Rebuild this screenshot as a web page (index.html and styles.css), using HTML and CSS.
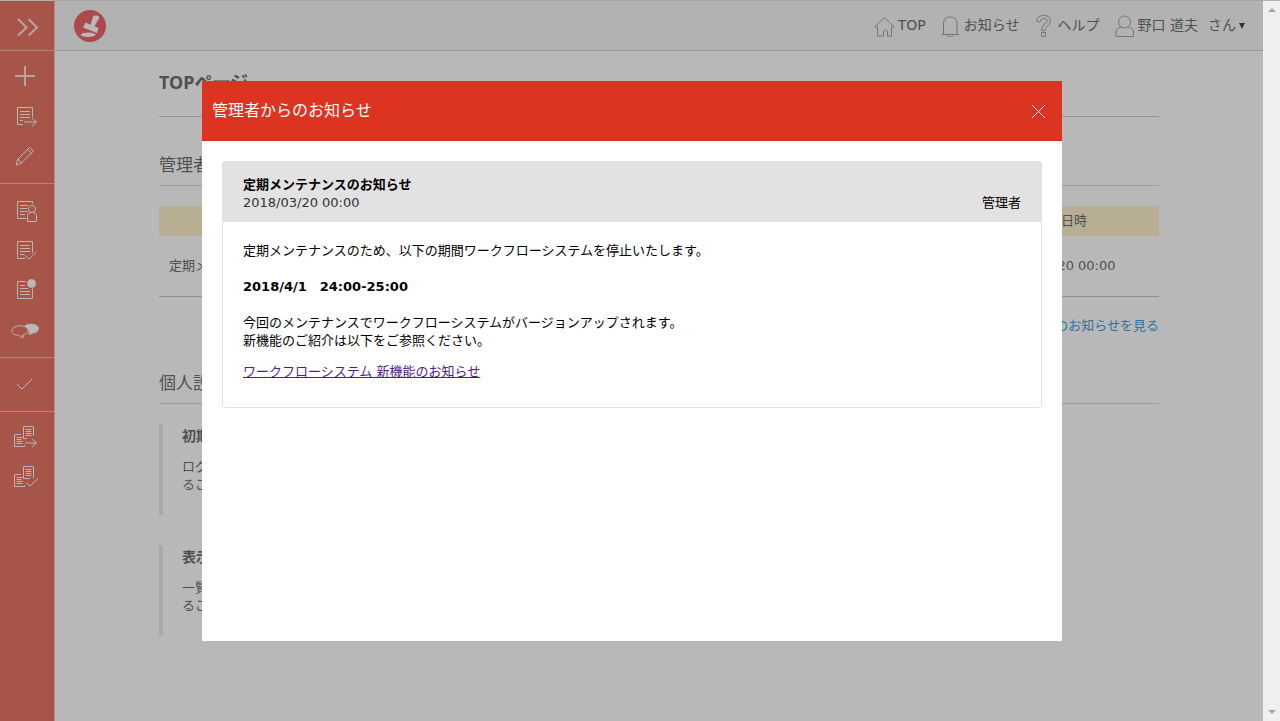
FILE: index.html
```html
<!DOCTYPE html>
<html lang="ja">
<head>
<meta charset="utf-8">
<title>TOPページ</title>
<link rel="stylesheet" href="styles.css">
</head>
<body>
<div class="app">
  <nav class="sidebar" aria-label="メニュー">
    <button class="side-toggle" aria-label="メニューを開く">
      <svg width="54" height="48" viewBox="0 0 54 48"><path class="thick" d="M18 17l8.500 8.500-8.500 8M28.500 17l8.500 8.500-8.500 8"/></svg>
    </button>
    <div class="side-group">
      <button class="side-item" aria-label="新規作成"><svg width="54" height="40" viewBox="0 0 54 40"><path class="thick" d="M15 20h20M25 10v20"/></svg></button>
      <button class="side-item" aria-label="申請書類"><svg width="54" height="40" viewBox="0 0 54 40"><path d="M32.500 21V11.500h-15v17H23M20 15.500h10M20 18.500h10M20 21.500h10M20 24.500h3M24 26h12.500M32 22l4.500 4-4.500 4"/></svg></button>
      <button class="side-item" aria-label="下書き"><svg width="54" height="40" viewBox="0 0 54 40"><path d="M16 29l2-6L29.500 11.500l4 3.500L21.500 27zM18 23l3.500 4M27.500 13.500l4 3.500"/></svg></button>
    </div>
    <div class="side-group mid">
      <button class="side-item" aria-label="担当書類"><svg width="54" height="40" viewBox="0 0 54 40"><path d="M32.500 13v-2.500h-15v17H26M20 14.500h8M20 17.500h7M20 20.500h8M20 23.500h5"/><circle cx="32" cy="18" r="3.500"/><path d="M27.500 30.500v-6q0-2.500 3-3h3q3 .5 3 3v6z"/></svg></button>
      <button class="side-item" aria-label="承認済み"><svg width="54" height="40" viewBox="0 0 54 40"><path d="M32.500 22V10.500h-15v17H25M20 14.500h10M20 17.500h10M20 20.500h10M20 23.500h4M24.500 24l4.500 4 7.500-7"/></svg></button>
      <button class="side-item" aria-label="未読書類"><svg width="54" height="40" viewBox="0 0 54 40"><path d="M26 10.500h-8.500v17h15v-10M20 14.500h5M20 17.500h8M20 20.500h10M20 23.500h10"/><circle class="solid" cx="31.500" cy="12.500" r="4"/></svg></button>
      <button class="side-item" aria-label="コメント"><svg width="54" height="40" viewBox="0 0 54 40"><path d="M19 24.300c-10 .2-9-9.500 1-9.500 10.500 0 10.500 8.500 2 9.300l1.500 2.600q-3-.4-4.500-2.400"/><path class="solid" d="M25 15c3-3 13.500-2 13.500 2.500 0 3-3.500 4.500-6.500 4.700l-3 1.300.5-1.700q0-4-4.500-6.800"/></svg></button>
    </div>
    <div class="side-group mid">
      <button class="side-item" aria-label="確認"><svg width="54" height="40" viewBox="0 0 54 40"><path d="M17 19l5 5 10-10"/></svg></button>
    </div>
    <div class="side-group last">
      <button class="side-item" aria-label="一括申請"><svg width="54" height="40" viewBox="0 0 54 40"><path d="M33.500 19V9.500h-10v12H27M25.500 12.500h6M25.500 14.500h6M25.500 16.500h6M25.500 18.500h6M21 17.500h-6.500v12h10V28M16.500 20.500h6M16.500 22.500h5M16.500 24.500h6M16.500 26.500h6M25 26h11M32 22l4.500 4-4.500 4"/></svg></button>
      <button class="side-item" aria-label="一括承認"><svg width="54" height="40" viewBox="0 0 54 40"><path d="M33.500 21V9.500h-10v12H30M25.500 12.500h6M25.500 14.500h6M25.500 16.500h6M25.500 18.500h6M21 17.500h-6.500v12h10V28M16.500 20.500h6M16.500 22.500h5M16.500 24.500h6M16.500 26.500h6M26 25.500l4 3.500 8-7.500"/></svg></button>
    </div>
  </nav>

  <div class="page">
    <header class="topbar">
      <a class="logo" href="#" aria-label="ホーム">
        <svg width="32" height="32" viewBox="0 0 32 32"><circle class="disc" cx="16" cy="16" r="16"/><ellipse class="mark" cx="14.200" cy="24.800" rx="7.500" ry="2.200"/><path class="mark" d="M11.500 12.500l5.200 2.200 2.300-8.200c.3-1.300 5.300-1.800 6 .5.300 1.300-.5 2.300-1.300 3.500l-3.200 5.700 4 1.700-1.500 5L9 17.500z"/></svg>
      </a>
      <nav class="topnav" aria-label="ヘッダー">
        <a href="#"><svg width="21" height="24" viewBox="0 0 21 24"><path d="M.8 14L10.500 4.500l9.700 9.500h-2.700v9h-4v-5q-2.500-2.500-4 0v5h-6v-9z"/></svg>TOP</a>
        <a href="#"><svg width="20" height="24" viewBox="0 0 20 24"><path d="M.5 21.500h17.500M2.500 21.500V11q0-7 6.800-7t6.700 7v10.500M6 22q3.200 4 6.500 0"/></svg>お知らせ</a>
        <a href="#"><svg width="20" height="24" viewBox="0 0 20 24"><path d="M1.500 8Q2.500 2.500 8.500 2.500q7 0 7 5.500 0 3-3.200 5-2.300 1.200-2.300 4.500H6.500q0-4.500 3-6.500 2.800-1.400 2.800-3 0-2.500-3.500-2.500-3 0-4 3.500zM6.500 19.500h4v4h-4z"/></svg>ヘルプ</a>
        <button class="account"><svg width="20" height="24" viewBox="0 0 20 24"><ellipse cx="9.500" cy="9" rx="6" ry="6"/><path d="M6.500 14q-5.500 1-5.500 5v4.500h17.500V19q0-4-5.500-5"/></svg><span>野口 道夫</span><span class="suffix">さん</span><span class="caret"></span></button>
      </nav>
    </header>

    <main class="content">
      <h1>TOPページ</h1>
      <section>
        <h2>管理者からのお知らせ</h2>
        <table class="news">
          <thead><tr><th>件名</th><th class="date">日時</th></tr></thead>
          <tbody><tr><td>定期メンテナンスのお知らせ</td><td>2018/03/20 00:00</td></tr></tbody>
        </table>
        <p class="more"><a href="#">過去のお知らせを見る</a></p>
      </section>
      <section>
        <h2>個人設定</h2>
        <article class="setting"><h3>初期表示設定</h3><p>ログイン後の画面を設定す<br>ることができます。</p></article>
        <article class="setting"><h3>表示設定</h3><p>一覧画面の表示を設定す<br>ることができます。</p></article>
      </section>
    </main>
  </div>

  <div class="scrollbar" aria-hidden="true"><span class="arrow up"></span><span class="arrow down"></span></div>
</div>

<div class="overlay">
  <div class="modal" role="dialog" aria-labelledby="modal-title">
    <header class="modal-head">
      <h2 id="modal-title">管理者からのお知らせ</h2>
      <button class="close" aria-label="閉じる"><svg width="15" height="15" viewBox="0 0 15 15"><path d="M1 1l13 13M14 1L1 14"/></svg></button>
    </header>
    <div class="modal-body">
      <article class="notice">
        <header class="notice-head">
          <h3>定期メンテナンスのお知らせ</h3>
          <div class="meta"><time>2018/03/20 00:00</time><span class="author">管理者</span></div>
        </header>
        <div class="notice-body">
          <p>定期メンテナンスのため、以下の期間ワークフローシステムを停止いたします。</p>
          <p><strong>2018/4/1　24:00-25:00</strong></p>
          <p>今回のメンテナンスでワークフローシステムがバージョンアップされます。<br>新機能のご紹介は以下をご参照ください。</p>
          <p class="link"><a href="#">ワークフローシステム 新機能のお知らせ</a></p>
        </div>
      </article>
    </div>
  </div>
</div>
</body>
</html>
```

FILE: styles.css
```css
* { box-sizing: border-box; }

body, h1, h2, h3, p { margin: 0; }

body {
  font-family: "DejaVu Sans", "Noto Sans CJK JP", sans-serif;
  font-size: 13px;
  line-height: 18px;
  color: #505050;
  background: #b8b8b8;
}

button {
  padding: 0;
  border: 0;
  background: none;
  font: inherit;
  color: inherit;
  cursor: pointer;
}

a { color: inherit; text-decoration: none; }

svg { display: block; fill: none; }

.app { display: flex; min-height: 100vh; }

/* Sidebar */
.sidebar {
  flex: none;
  width: 55px;
  background: #a65548;
  border-top: 1px solid #b2b2b2;
  border-right: 1px solid #b98c85;
}

.side-toggle {
  display: block;
  width: 100%;
  height: 50px;
  border-bottom: 1px solid #b5857d;
}

.side-group { padding: 5px 0 7px; border-bottom: 1px solid #b5857d; }
.side-group.mid { padding: 7px 0 6px; }
.side-group.last { border-bottom: 0; }
.side-item { display: block; width: 100%; height: 40px; }

.sidebar path, .sidebar circle { stroke: #bbb6b5; stroke-width: 1; }
.sidebar .thick { stroke: #bba39f; stroke-width: 2; }
.sidebar .solid { fill: #b8b8b8; }

/* Page */
.page { flex: 1; min-width: 0; }

.topbar {
  display: flex;
  align-items: center;
  justify-content: space-between;
  height: 51px;
  padding: 0 18px 0 19px;
  background: #b2b2b2;
  border-top: 1px solid #a6a6a6;
  border-bottom: 1px solid #969696;
}

.logo .disc { fill: #ad494c; }
.logo .mark { fill: #b8b8b8; }

.topnav { display: flex; gap: 15px; padding-bottom: 2px; font-size: 14px; }
.topnav a, .account { display: flex; align-items: center; gap: 3px; }
.topnav svg path, .topnav svg ellipse { stroke: #757575; }
.suffix { margin-left: 7px; }

.caret {
  margin-top: 2px;
  border: solid transparent;
  border-width: 6px 3px 0;
  border-top-color: #333;
}

.content { max-width: 1000px; margin: 0 auto; padding-top: 21px; }

h1 {
  padding-bottom: 24px;
  border-bottom: 1px solid #969696;
  font-size: 18px;
  font-family: "Noto Sans", "Noto Sans CJK JP", sans-serif;
  line-height: 20px;
}

.content h2 {
  padding: 38px 0 10px;
  border-bottom: 1px solid #9c9c9c;
  font-size: 17px;
  font-weight: 400;
  line-height: 20px;
}

.news { width: 100%; margin-top: 20px; border-collapse: collapse; }
.news th { height: 30px; padding: 0 10px; background: #b7ae93; font-weight: 400; }
.news .date { width: 170px; }
.news td { height: 60px; padding: 0 10px; border-bottom: 1px solid #909090; }

.more { padding-top: 20px; text-align: right; color: #36719a; }

.setting {
  height: 91px;
  margin: 20px 0 30px;
  padding: 3px 0 0 19px;
  border-left: 4px solid #a9a9a9;
}

.setting h3 { margin-bottom: 13px; font-size: 14px; line-height: 18px; }

/* Scroll track */
.scrollbar {
  display: flex;
  flex: none;
  flex-direction: column;
  align-items: center;
  justify-content: space-between;
  width: 17px;
  padding: 7px 0;
  background: #f0f0f0;
  border-top: 1px solid #b2b2b2;
}

.arrow { border: 4px solid transparent; }
.arrow.up { border-top: 0; border-bottom-color: #a3a3a3; }
.arrow.down { border-bottom: 0; border-top-color: #a3a3a3; }

/* Dialog */
.overlay {
  position: fixed;
  inset: 0 17px 0 0;
  display: flex;
  align-items: center;
  justify-content: center;
  padding: 1px 0 0 1px;
}

.modal { width: 860px; min-height: 560px; background: #fff; color: #000; }

.modal-head {
  display: flex;
  align-items: center;
  justify-content: space-between;
  height: 60px;
  padding: 0 16px 0 10px;
  background: #dc3420;
  color: #fff;
}

.modal-head h2 { font-size: 16px; font-weight: 400; }
.close path { stroke: #fff; stroke-width: 1; }

.modal-body { padding: 20px; }
.notice { border: 1px solid #e2e2e2; border-radius: 3px; }
.notice-head { padding: 14px 20px 10px; background: #e2e2e2; }
.notice-head h3 { font-size: 13px; }
.meta { display: flex; justify-content: space-between; }
.meta time { color: #333; }

.notice-body { padding: 20px 20px 26px; }
.notice-body p { margin-bottom: 18px; }
.notice-body .link { margin: -5px 0 0; color: #551a8b; }
.link a { text-decoration: underline; }
```
